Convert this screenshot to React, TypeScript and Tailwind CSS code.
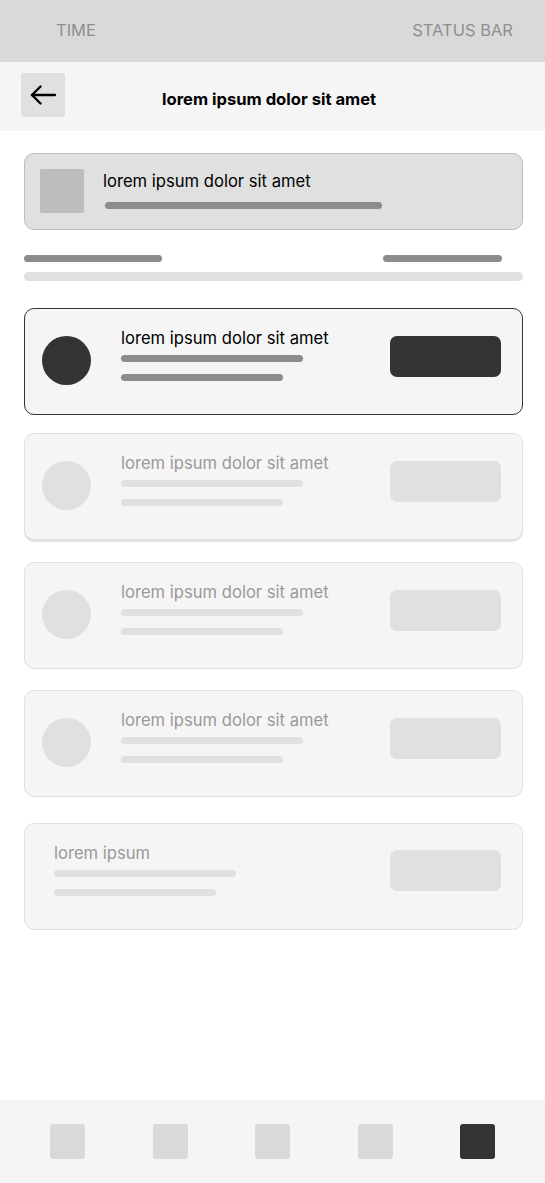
import React from "react";

const font = { fontFamily: "Inter, 'Noto Sans', sans-serif" };

function BackArrow() {
  return (
    <svg width="26" height="20" viewBox="0 0 26 20" fill="none">
      <path d="M25 10H2" stroke="#000" strokeWidth="2.4" strokeLinecap="round" />
      <path d="M10.5 1.5L2 10l8.5 8.5" stroke="#000" strokeWidth="2.4" strokeLinecap="round" strokeLinejoin="round" />
    </svg>
  );
}

function ListCard({ active, shadow }: { active?: boolean; shadow?: boolean }) {
  return (
    <div
      className={`flex h-[107px] w-full items-start rounded-[10px] border bg-[#f5f5f5] pl-[17px] pr-[21px] ${
        active ? "border-[#333333]" : "border-[#e0e0e0]"
      } ${shadow ? "shadow-[0_2px_0_0_#e3e3e3]" : ""}`}
    >
      <div className={`mt-[27px] h-[49px] w-[49px] shrink-0 rounded-full ${active ? "bg-[#333333]" : "bg-[#e0e0e0]"}`} />
      <div className="ml-[30px] mt-[19px] flex flex-col">
        <p className={`text-[16.6px] leading-[20px] ${active ? "text-black" : "text-[#9a9a9a]"}`}>lorem ipsum dolor sit amet</p>
        <div className={`mt-[7px] h-[7px] w-[182px] rounded-full ${active ? "bg-[#8c8c8c]" : "bg-[#e0e0e0]"}`} />
        <div className={`mt-[12px] h-[7px] w-[162px] rounded-full ${active ? "bg-[#8c8c8c]" : "bg-[#e0e0e0]"}`} />
      </div>
      <div className={`ml-auto mt-[27px] h-[41px] w-[111px] rounded-[7px] ${active ? "bg-[#333333]" : "bg-[#e0e0e0]"}`} />
    </div>
  );
}

export default function App() {
  return (
    <div className="flex h-screen flex-col bg-white" style={font}>
      <div className="flex h-[62px] items-center justify-between bg-[#d9d9d9] pb-[2px] pl-[56px] pr-[32px] text-[16.5px] text-[#8f8f8f]">
        <span>TIME</span>
        <span>STATUS BAR</span>
      </div>
      <div className="relative flex h-[69px] items-start bg-[#f5f5f5] pl-[21px] pt-[11px]">
        <button className="flex h-[44px] w-[44px] items-center justify-center rounded-[3px] bg-[#e0e0e0]">
          <BackArrow />
        </button>
        <p className="ml-[97px] mt-[16px] text-[16.6px] font-bold leading-[20px] text-black">lorem ipsum dolor sit amet</p>
      </div>

      <div className="flex flex-col pl-[24px] pr-[22px] pt-[22px]">
        <div className="flex h-[77px] items-start rounded-[10px] border border-[#bdbdbd] bg-[#e0e0e0] pl-[15px]">
          <div className="mt-[15px] h-[44px] w-[44px] rounded-[2px] bg-[#bdbdbd]" />
          <div className="ml-[19px] mt-[17px] flex flex-col">
            <p className="text-[16.6px] leading-[20px] text-black">lorem ipsum dolor sit amet</p>
            <div className="ml-[2px] mt-[11px] h-[7px] w-[277px] rounded-full bg-[#8c8c8c]" />
          </div>
        </div>

        <div className="mt-[25px] flex justify-between pr-[21px]">
          <div className="h-[7px] w-[138px] rounded-full bg-[#8c8c8c]" />
          <div className="h-[7px] w-[119px] rounded-full bg-[#8c8c8c]" />
        </div>
        <div className="mt-[10px] h-[9px] w-full rounded-full bg-[#e0e0e0]" />

        <div className="mt-[27px]">
          <ListCard active />
        </div>
        <div className="mt-[18px]">
          <ListCard shadow />
        </div>
        <div className="mt-[22px]">
          <ListCard />
        </div>
        <div className="mt-[21px]">
          <ListCard />
        </div>

        <div className="mt-[26px] flex h-[107px] w-full items-start rounded-[10px] border border-[#e0e0e0] bg-[#f5f5f5] pl-[29px] pr-[21px]">
          <div className="mt-[19px] flex flex-col">
            <p className="text-[16.6px] leading-[20px] text-[#9a9a9a]">lorem ipsum</p>
            <div className="mt-[7px] h-[7px] w-[182px] rounded-full bg-[#e0e0e0]" />
            <div className="mt-[12px] h-[7px] w-[162px] rounded-full bg-[#e0e0e0]" />
          </div>
          <div className="ml-auto mt-[26px] h-[41px] w-[111px] rounded-[7px] bg-[#e0e0e0]" />
        </div>
      </div>

      <div className="mt-auto flex h-[83px] items-center justify-between bg-[#f5f5f5] px-[50px]">
        <div className="h-[35px] w-[35px] rounded-[3px] bg-[#d9d9d9]" />
        <div className="h-[35px] w-[35px] rounded-[3px] bg-[#d9d9d9]" />
        <div className="h-[35px] w-[35px] rounded-[3px] bg-[#d9d9d9]" />
        <div className="h-[35px] w-[35px] rounded-[3px] bg-[#d9d9d9]" />
        <div className="h-[35px] w-[35px] rounded-[3px] bg-[#333333]" />
      </div>
    </div>
  );
}
